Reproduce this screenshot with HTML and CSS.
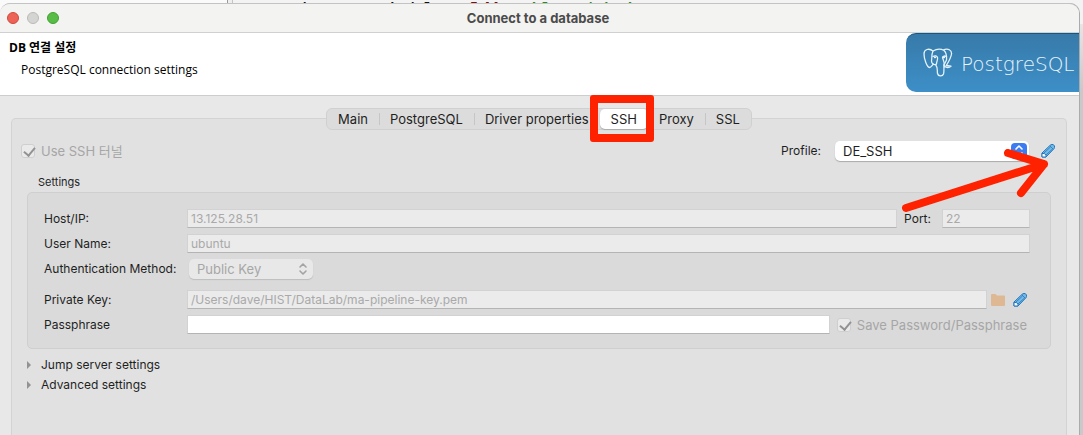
FILE: index.html
```
<!DOCTYPE html>
<html lang="ko">
<head>
<meta charset="utf-8">
<title>Connect to a database</title>
<link rel="stylesheet" href="styles.css">
</head>
<body>
<svg class="defs" aria-hidden="true">
  <symbol id="pencil" viewBox="0 0 14 14">
    <path d="M1 9 9 1.4Q10 .5 11 .5h1.2L13.5 2v1.5Q13.5 4.2 12.7 5L5 13H1z" fill="#72b9e6" stroke="#2477bd"/>
    <path d="M9 2 12 5M3 9l6.5-6M5 11l6.5-6" fill="none" stroke="#2477bd" stroke-width=".8"/>
    <path d="M1 9.5h2.2L5 11v2H1z" fill="#fff" stroke="#2477bd"/>
  </symbol>
</svg>

<div class="editor" aria-hidden="true">
  <div class="gutter"></div>
  <code class="code"><span>show variables</span><span class="keyword">like</span><span class="string">'log_bin'</span></code>
</div>

<main class="window">
  <div class="titlebar">
    <div class="lights">
      <button class="light close" aria-label="Close"></button>
      <button class="light minimize" aria-label="Minimize" disabled></button>
      <button class="light maximize" aria-label="Maximize"></button>
    </div>
    <div class="title">Connect to a database</div>
  </div>

  <header class="header">
    <div class="heading">
      <h1>DB 연결 설정</h1>
      <p>PostgreSQL connection settings</p>
    </div>
    <div class="brand">
      <svg class="elephant" viewBox="0 0 30 30" fill="none" stroke="#e4f2fb" stroke-width="1.3" stroke-linecap="round" stroke-linejoin="round" aria-hidden="true">
        <path d="M10 3C6-.2 1 1.200 1 6c0 5 3 13 5.500 13.500C8 19.500 9 17.500 10.500 16M10 3C8.500 6 9 10 8.500 13c0 3 2.500 4 4.500 3.500"/>
        <path d="M10 3c3.500-2 8-2.200 11-.5 2.500 2 2.700 6 2.500 9.500L21 17M20 2c5-2 9 0 8.500 4-.5 4-3 8-5.500 12"/>
        <path d="M13 17.500c2 2 1 5 1.500 8 .6 3 5 3.200 6 .5.8-2.500.2-6 .5-8.500l1.500 1.500c2 .8 4 .5 5.500-.8l-4.500-.7"/>
        <path d="M10 8.500c2-1.200 4-.7 4.500 1 .6 2-1 4-1 6.500M23.500 8.500c-1.500-.8-3.500-.7-4 .8.200 2.400 2.500 4.500 1.500 8.200M11.500 9.500h1M20.500 9.500h1"/>
      </svg>
      <span>PostgreSQL</span>
    </div>
  </header>

  <div class="content">
    <div class="tabs" role="tablist">
      <button class="tab" role="tab">Main</button>
      <button class="tab divided" role="tab">PostgreSQL</button>
      <button class="tab divided" role="tab">Driver properties</button>
      <button class="tab selected" role="tab" aria-selected="true">SSH</button>
      <button class="tab" role="tab">Proxy</button>
      <button class="tab divided" role="tab">SSL</button>
    </div>

    <section class="panel" role="tabpanel">
      <div class="toprow">
        <label class="check"><input type="checkbox" checked disabled>Use SSH 터널</label>
        <div class="profile">
          <label for="profile">Profile:</label>
          <div class="combo">
            <select id="profile"><option>DE_SSH</option></select>
            <svg class="stepper" viewBox="0 0 16 16" aria-hidden="true"><path d="m5 6 3-3 3 3M5 10l3 3 3-3" fill="none" stroke="#fff" stroke-width="1.600" stroke-linecap="round" stroke-linejoin="round"/></svg>
          </div>
          <button class="icon" aria-label="Edit profile"><svg><use href="#pencil"/></svg></button>
        </div>
        <svg class="arrow" viewBox="0 0 150 64" aria-hidden="true"><path d="M6 59 144 15M108 4l36 11-23 29" fill="none" stroke="#ff2200" stroke-width="8" stroke-linecap="round" stroke-linejoin="round"/></svg>
      </div>

      <h2>Settings</h2>
      <form class="group">
        <label for="host">Host/IP:</label>
        <div class="line">
          <input class="field grow" id="host" value="13.125.28.51" disabled>
          <label class="port-label" for="port">Port:</label>
          <input class="field port" id="port" value="22" disabled>
        </div>
        <label for="user">User Name:</label>
        <div class="line"><input class="field grow" id="user" value="ubuntu" disabled></div>
        <label class="auth" for="auth">Authentication Method:</label>
        <div class="line auth">
          <div class="combo disabled">
            <select id="auth" disabled><option>Public Key</option></select>
            <svg class="stepper" viewBox="0 0 16 16" aria-hidden="true"><path d="m5 6 3-3 3 3M5 10l3 3 3-3" fill="none" stroke="#a3a3a3" stroke-width="1.600" stroke-linecap="round" stroke-linejoin="round"/></svg>
          </div>
        </div>
        <label for="key">Private Key:</label>
        <div class="line">
          <input class="field grow" id="key" value="/Users/dave/HIST/DataLab/ma-pipeline-key.pem" disabled>
          <button type="button" class="icon folder" aria-label="Browse" disabled><svg viewBox="0 0 14 14"><path d="M0 2q0-1 1-1h3.500l1.500 1.500h7q1 0 1 1V12q0 1-1 1H1q-1 0-1-1z" fill="#deb892"/></svg></button>
          <button type="button" class="icon edit-key" aria-label="Edit key"><svg><use href="#pencil"/></svg></button>
        </div>
        <label for="pass">Passphrase</label>
        <div class="line">
          <input class="field grow" id="pass" type="password">
          <label class="check save"><input type="checkbox" checked disabled>Save Password/Passphrase</label>
        </div>
      </form>

      <details><summary>Jump server settings</summary></details>
      <details><summary>Advanced settings</summary></details>
    </section>
  </div>
</main>
</body>
</html>
```
FILE: styles.css
```
* { box-sizing: border-box; }
body {
  margin: 0;
  height: 100vh;
  padding: 3px 4px 0 0;
  overflow: hidden;
  position: relative;
  background: linear-gradient(#f0f0f0, #c9c9c9 90px);
  color: #1f1f1f;
  font: 12px/16px Inter, "Noto Sans CJK KR", sans-serif;
}
button, input, select { font: inherit; color: inherit; margin: 0; }
button { padding: 0; border: 0; background: none; }
.defs { position: absolute; width: 0; height: 0; }

.editor {
  position: absolute;
  inset: 0 0 auto 0;
  height: 24px;
  display: flex;
  overflow: hidden;
  background: #f3f3f3;
}
.gutter {
  flex: none;
  width: 233px;
  background: #fafafa;
  border-right: 1px solid #c4c4c4;
  box-shadow: inset -4px 0 #eee, inset -5px 0 #999;
}
.code {
  display: flex;
  gap: 11px;
  padding: 2px 0 0 57px;
  font: 20px/20px "Liberation Mono", monospace;
  color: #111;
  white-space: pre;
}
.keyword { color: #7d1010; font-weight: bold; }
.string { color: #2f8a1c; }

.window {
  position: relative;
  height: 100%;
  display: flex;
  flex-direction: column;
  overflow: hidden;
  border-top: 1px solid #c3c3c3;
  border-radius: 10px 10px 0 0;
  background: #e8e8e8;
  box-shadow: 1px 0 0 #ababab;
}
.titlebar {
  display: grid;
  grid-template-columns: 1fr auto 1fr;
  align-items: center;
  height: 29px;
  padding: 0 10px 1px 7px;
  background: #f3f3f1;
  border-bottom: 1px solid #d0d0d0;
}
.lights { display: flex; gap: 8px; }
.light { width: 12px; height: 12px; border-radius: 50%; border: 1px solid; }
.close { background: #ed6457; border-color: #d2483c; }
.minimize { background: #d4d4d3; border-color: #b9b9b8; }
.maximize { background: #58bd46; border-color: #43a033; }
.title { font-size: 13px; font-weight: 700; color: #4b4b4b; }

.header {
  display: flex;
  justify-content: space-between;
  height: 63px;
  background: #fff;
  border-bottom: 1px solid #cdcdcd;
}
.heading { padding: 6px 0 0 9px; color: #000; font-family: "Open Sans", "Noto Sans CJK KR", sans-serif; }
h1 { margin: 0; font-size: 12px; line-height: 18px; font-weight: 700; }
p { margin: 4px 0 0 12px; line-height: 18px; }
.brand {
  display: flex;
  align-items: center;
  gap: 8px;
  width: 173px;
  height: 59px;
  padding-left: 17px;
  overflow: hidden;
  border-radius: 10px 0 0 10px;
  border-top: 1px solid #135785;
  background: linear-gradient(#377aa9, #3d8fc8);
  color: #e8f4fc;
  font-family: "DejaVu Sans", sans-serif;
  font-size: 20px;
  font-weight: 200;
}
.brand span { padding-top: 2px; }
.elephant { flex: none; width: 30px; height: 30px; }

.content {
  flex: 1;
  display: flex;
  flex-direction: column;
  padding: 12px 12px 0 11px;
}
.tabs {
  z-index: 1;
  align-self: center;
  display: flex;
  height: 22px;
  margin-bottom: -12px;
  border: 1px solid #d0d0d0;
  border-radius: 6px;
  background: #dcdcdc;
}
.tab { position: relative; padding: 0 11px; font-size: 13px; line-height: 20px; border-radius: 5px; }
.tab.divided::before {
  content: "";
  position: absolute;
  left: 0;
  top: 4px;
  height: 12px;
  border-left: 1px solid #c6c6c6;
}
.tab.selected { background: #fff; box-shadow: 0 1px 1px #aaa; }
.tab.selected::after {
  content: "";
  position: absolute;
  inset: -14px -6px -13px -10px;
  border: 8px solid #ff2200;
  border-radius: 3px;
}
.panel {
  flex: 1;
  padding: 21px 15px 0;
  border: 1px solid #d3d3d3;
  border-bottom: 0;
  border-radius: 5px 5px 0 0;
  background: #e1e1e1;
}
.toprow {
  position: relative;
  display: flex;
  align-items: center;
  justify-content: space-between;
  height: 22px;
  margin: 0 -4px 0 -6px;
}
.check { display: flex; align-items: center; gap: 6px; color: #a6a6a6; font-size: 13px; }
.check input {
  appearance: none;
  width: 14px;
  height: 14px;
  border: 1px solid #cfcfcf;
  border-radius: 3px;
  background: #eaeaea;
  position: relative;
}
.check input::after {
  content: "";
  position: absolute;
  left: 4px;
  top: 0;
  width: 5px;
  height: 9px;
  border: solid #929292;
  border-width: 0 2px 2px 0;
  transform: rotate(40deg);
}
.profile { display: flex; align-items: center; }
.combo { position: relative; }
.profile .combo { width: 194px; margin: 0 12px 0 14px; }
.combo select {
  appearance: none;
  display: block;
  width: 100%;
  height: 20px;
  padding: 0 24px 1px 8px;
  border: 0;
  border-radius: 5px;
  background: #fff;
  box-shadow: 0 1px 1px #aaa;
  font-size: 13px;
  line-height: 18px;
}
.stepper {
  position: absolute;
  right: 2px;
  top: 2px;
  width: 16px;
  height: 16px;
  border-radius: 4px;
  background: #3b7df0;
  pointer-events: none;
}
.combo.disabled { width: 124px; margin-left: 2px; }
.combo.disabled select { background: #e8e8e8; color: #a6a6a6; opacity: 1; box-shadow: 0 1px 1px #bdbdbd; }
.disabled .stepper { background: none; }
.icon, .icon svg { display: block; width: 14px; height: 14px; flex: none; }
.arrow { position: absolute; right: 5px; top: 9px; width: 150px; height: 64px; pointer-events: none; }

h2 { margin: 12px 0 2px 11px; font-size: 11px; line-height: 16px; font-weight: 400; }
.group {
  display: grid;
  grid-template-columns: 143px 1fr;
  row-gap: 6px;
  align-items: center;
  padding: 16px 20px 14px 16px;
  border: 1px solid #cfcfcf;
  border-radius: 5px;
  background: #dadada;
}
.line { display: flex; align-items: center; min-width: 0; }
.auth { margin-bottom: 5px; }
.field {
  min-width: 0;
  height: 19px;
  padding: 0 3px;
  border: 1px solid #d2d2d2;
  border-bottom-color: #b4b4b4;
  background: #fff;
}
.field:disabled { background: #ebebeb; color: #a9a9a9; }
.grow { flex: 1; }
.port-label { margin: 0 11px 0 7px; }
.port { width: 88px; }
.folder { margin-left: 4px; }
.edit-key { margin: 0 3px 0 8px; }
.save { margin: 0 3px 0 7px; }

details { margin-top: 4px; }
.group + details { margin-top: 8px; }
summary { display: flex; align-items: center; gap: 10px; }
summary::before {
  content: "";
  border: solid transparent;
  border-width: 4px 0 4px 4px;
  border-left-color: #929292;
}
```
